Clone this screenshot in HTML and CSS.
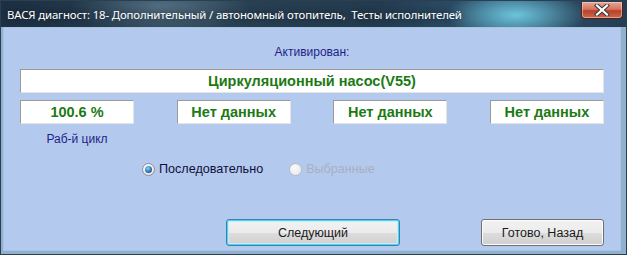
FILE: index.html
```html
<!DOCTYPE html>
<html lang="ru">
<head>
  <meta charset="UTF-8">
  <title>ВАСЯ диагност</title>
  <link rel="stylesheet" href="styles.css">
</head>
<body>

<div class="window">
  <!-- Title bar -->
  <div class="titlebar">
    <span class="title">ВАСЯ диагност: 18- Дополнительный / автономный отопитель,&nbsp; Тесты исполнителей</span>
    <div class="close-btn">
      <svg width="16" height="12" viewBox="0 0 16 12">
        <path d="M3 1.5 L13 10.5 M13 1.5 L3 10.5" stroke="#3a3a3a" stroke-width="4.2" stroke-linecap="square"/>
        <path d="M3 1.5 L13 10.5 M13 1.5 L3 10.5" stroke="#fff" stroke-width="2.2" stroke-linecap="square"/>
      </svg>
    </div>
  </div>

  <div class="client">
    <div class="caption">Активирован:</div>

    <div class="field field-wide">Циркуляционный насос(V55)</div>

    <div class="values">
      <div class="value-col">
        <div class="field">100.6 %</div>
        <div class="caption">Раб-й цикл</div>
      </div>
      <div class="value-col">
        <div class="field">Нет данных</div>
      </div>
      <div class="value-col">
        <div class="field">Нет данных</div>
      </div>
      <div class="value-col">
        <div class="field">Нет данных</div>
      </div>
    </div>

    <div class="modes">
      <label class="radio checked"><span class="dot"></span>Последовательно</label>
      <label class="radio disabled"><span class="dot"></span>Выбранные</label>
    </div>

    <div class="buttons">
      <button type="button" class="btn btn-focus">Следующий</button>
      <button type="button" class="btn">Готово, Назад</button>
    </div>
  </div>
</div>

</body>
</html>
```

FILE: styles.css
```css
/* General Styles */
body {
  margin: 0;
  padding: 0;
  font-family: "Liberation Sans", Arial, sans-serif;
  background: #b4c9ee;
}
.window {
  width: 627px;
  height: 255px;
  box-sizing: border-box;
  border: 1px solid #2b3f52;
  background: #8fb0cf;
  display: flex;
  flex-direction: column;
}

/* Title bar */
.titlebar {
  height: 26px;
  display: flex;
  align-items: center;
  justify-content: space-between;
  padding-left: 6px;
  background:
    radial-gradient(ellipse 70px 26px at 515px 14px, rgba(120, 215, 240, 0.85), rgba(120, 215, 240, 0) 100%),
    radial-gradient(ellipse 90px 30px at 160px 6px, rgba(110, 140, 160, 0.6), rgba(110, 140, 160, 0) 100%),
    linear-gradient(90deg, #1d2f42 0%, #2a4254 30%, #243a4e 60%, #2f5670 80%, #253c52 100%);
}
.title {
  color: #fff;
  font-family: "Noto Sans", "Open Sans", sans-serif;
  font-size: 11.4px;
  letter-spacing: -0.15px;
  text-shadow: 0 0 6px rgba(0, 0, 0, 0.6);
  white-space: nowrap;
}
.close-btn {
  width: 42px;
  height: 17px;
  margin: -8px 3px 0 0;
  box-sizing: border-box;
  border: 1px solid #4b2320;
  border-top: none;
  border-radius: 0 0 4px 4px;
  background: linear-gradient(#e6a796 0%, #d8755e 45%, #b8402a 55%, #cc6a4c 100%);
  box-shadow: inset 0 0 0 1px rgba(255, 220, 210, 0.5);
  display: flex;
  align-items: center;
  justify-content: center;
}

/* Client area */
.client {
  flex: 1;
  margin: 0 5px 3px 2px;
  background: #b4c9ee;
  border: 1px solid #a9c4de;
  padding: 0 16px 4px 16px;
  display: flex;
  flex-direction: column;
}
.caption {
  color: #1f1f86;
  font-size: 12px;
  text-align: center;
}
.client > .caption {
  margin-top: 17px;
  margin-bottom: 10px;
}
.field {
  height: 24px;
  box-sizing: border-box;
  background: #fff;
  border-top: 1px solid #9a9a9a;
  border-left: 1px solid #9a9a9a;
  border-right: 1px solid #e4e4e4;
  border-bottom: 1px solid #e4e4e4;
  color: #1c7a14;
  font-weight: bold;
  font-size: 14.5px;
  display: flex;
  align-items: center;
  justify-content: center;
}
.values {
  margin-top: 7px;
  display: flex;
  justify-content: space-between;
  height: 50px;
}
.value-col {
  width: 114px;
}
.value-col .caption {
  margin-top: 8px;
}

/* Radio buttons */
.modes {
  margin-top: 12px;
  padding-left: 122px;
  display: flex;
  gap: 26px;
  font-size: 12.6px;
}
.radio {
  display: flex;
  align-items: center;
  color: #10103a;
}
.radio .dot {
  width: 11px;
  height: 11px;
  margin-right: 4px;
  border-radius: 50%;
  border: 1px solid #8a8f98;
  background: radial-gradient(circle at 40% 35%, #ffffff, #dcdde2);
  position: relative;
}
.radio.checked .dot::after {
  content: "";
  position: absolute;
  left: 2px;
  top: 2px;
  width: 7px;
  height: 7px;
  border-radius: 50%;
  background: radial-gradient(circle at 40% 35%, #8ad6f6, #1c5aa0 70%, #0d3f78);
}
.radio.disabled {
  color: #a8b0c0;
}
.radio.disabled .dot {
  border-color: #b8bcc4;
  background: radial-gradient(circle at 40% 35%, #fafafa, #e4e6ea);
}

/* Buttons */
.buttons {
  margin-top: auto;
  display: flex;
  justify-content: space-between;
  padding-left: 206px;
}
.btn {
  height: 27px;
  box-sizing: border-box;
  border: 1px solid #707070;
  border-radius: 3px;
  background: linear-gradient(#f2f2f2 0%, #ebebeb 50%, #dddddd 51%, #cfcfcf 100%);
  box-shadow: inset 0 0 0 1px #fcfcfc;
  font-family: "Liberation Sans", Arial, sans-serif;
  font-size: 12.5px;
  color: #1a1a1a;
  padding: 0;
}
.btn-focus {
  width: 174px;
  border-color: #3c7fb1;
  box-shadow: inset 0 0 0 1px #48d6f2, inset 0 0 0 2px #c5eef9;
}
.buttons .btn:last-child {
  width: 123px;
}
```
